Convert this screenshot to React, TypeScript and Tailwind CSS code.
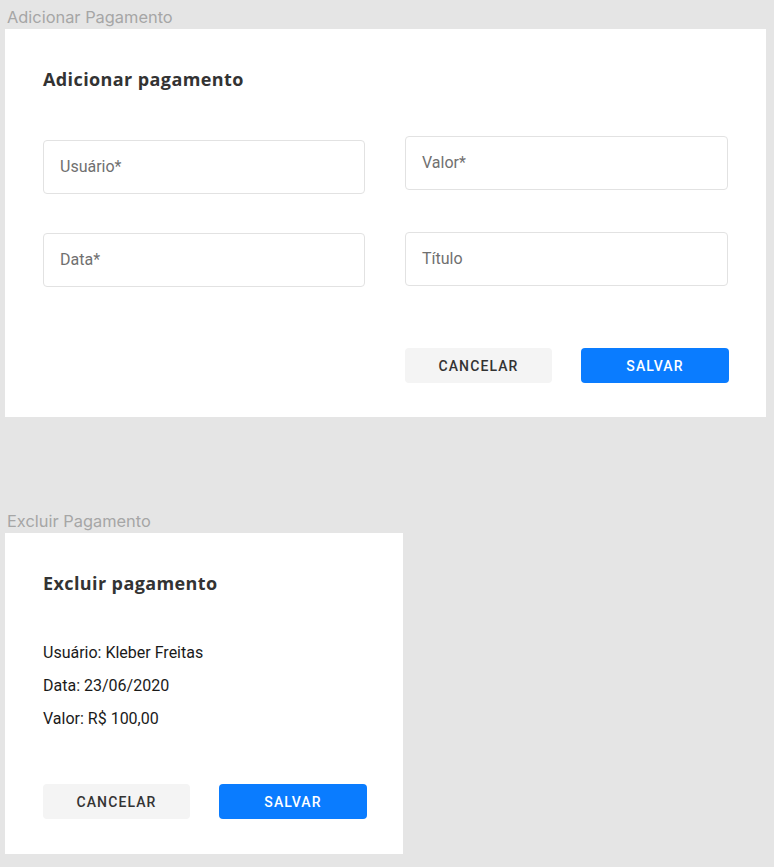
import React from 'react';

const inputBox =
  "h-[54px] w-[322px] rounded-[4px] border border-[#e2e2e2] bg-white flex items-center px-4 text-[16px] text-[#707070] font-['Roboto',sans-serif]";

function Field({ label, className = '' }: { label: string; className?: string }) {
  return <div className={`${inputBox} ${className}`}>{label}</div>;
}

function Buttons() {
  return (
    <div className="flex gap-[29px] font-['Roboto',sans-serif] text-[14px] font-medium tracking-[1.1px]">
      <button className="h-[35px] w-[147px] rounded-[4px] bg-[#f4f4f4] pt-[2px] text-[#333]">CANCELAR</button>
      <button className="h-[35px] w-[148px] rounded-[4px] bg-[#0a7cff] pt-[2px] text-white">SALVAR</button>
    </div>
  );
}

function FrameLabel({ children }: { children: React.ReactNode }) {
  return (
    <div className="h-[29px] pl-[7px] pt-[7px] text-[16.4px] leading-[20px] text-[#a6a6a6] font-['Inter',sans-serif]">
      {children}
    </div>
  );
}

function Title({ children }: { children: React.ReactNode }) {
  return (
    <h2 className="text-[18px] leading-[22px] font-bold tracking-[0.4px] text-[#333] font-['Open_Sans',sans-serif]">
      {children}
    </h2>
  );
}

export default function App() {
  return (
    <div className="min-h-[867px] w-[774px] bg-[#e5e5e5]">
      <FrameLabel>Adicionar Pagamento</FrameLabel>
      <section className="ml-[5px] w-[761px] bg-white pl-[38px] pr-[38px] pt-[39px] pb-[34px]">
        <Title>Adicionar pagamento</Title>
        <div className="mt-[46px] flex gap-[40px]">
          <div className="flex flex-col gap-[39px] pt-[4px]">
            <Field label="Usuário*" />
            <Field label="Data*" />
          </div>
          <div className="flex flex-col gap-[42px]">
            <Field label="Valor*" className="w-[323px]" />
            <Field label="Título" className="w-[323px]" />
          </div>
        </div>
        <div className="mt-[61px] mr-[-1px] flex justify-end">
          <Buttons />
        </div>
      </section>

      <div className="mt-[87px]">
        <FrameLabel>Excluir Pagamento</FrameLabel>
      </div>
      <section className="ml-[5px] w-[398px] bg-white pl-[38px] pt-[39px] pb-[35px]">
        <Title>Excluir pagamento</Title>
        <div className="mt-[48px] flex flex-col gap-[11px] text-[16px] leading-[22px] text-[#1a1a1a] font-['Roboto',sans-serif]">
          <p>Usuário: Kleber Freitas</p>
          <p>Data: 23/06/2020</p>
          <p>Valor: R$ 100,00</p>
        </div>
        <div className="mt-[54px]">
          <Buttons />
        </div>
      </section>
    </div>
  );
}
